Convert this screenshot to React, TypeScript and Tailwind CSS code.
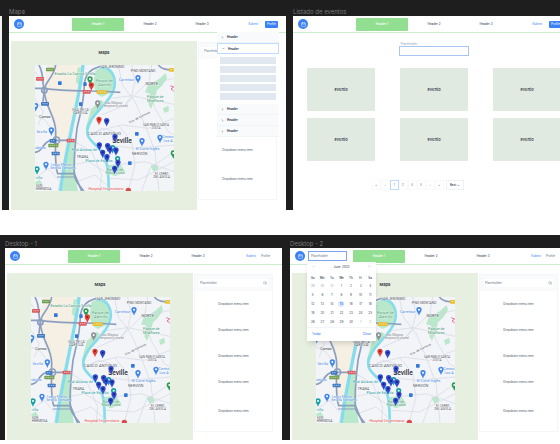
import { type ReactNode } from "react";
import { Calendar, ChevronDown, ChevronLeft, ChevronRight, Search } from "lucide-react";

type Point = [number, number];

const EVENT_PINS: Point[] = [
  [215, 167], [240, 215], [193, 240], [218, 242], [225, 252],
  [243, 255], [203, 262], [216, 275], [249, 292], [239, 310],
];

const MINOR_ROADS = [
  "M250 0 L262 60 L300 110 L330 180 L360 260 L372 378",
  "M230 100 L290 92 L417 118",
  "M200 150 L270 120 L330 60 L417 40",
  "M180 200 L260 180 L340 190 L417 160",
  "M250 180 L290 230 L300 300 L280 378",
  "M215 240 L300 250 L417 240",
  "M240 300 L330 290 L417 320",
  "M225 340 L310 345 L417 290",
  "M320 378 L345 310 L417 260",
  "M120 230 L170 260 L200 330 L195 378",
  "M110 300 L160 290 L210 320",
  "M125 350 L180 330 L215 360",
  "M150 130 L190 135 L230 100",
  "M0 150 L30 165 L55 200",
  "M0 340 L40 310 L75 350 L70 378",
  "M0 20 L20 50 M0 100 L25 140 L10 180",
  "M290 0 L300 50 L290 92 L270 120",
  "M350 0 L340 60 L360 130 L400 200 L417 210",
  "M170 210 L200 190 L240 200",
];

function Pin({ at, color, core, r = 8 }: { at: Point; color: string; core: string; r?: number }) {
  const [x, y] = at;
  return (
    <g>
      <path
        d={`M${x - r} ${y} A${r} ${r} 0 1 1 ${x + r} ${y} C${x + r} ${y + 6} ${x + 2} ${y + 9} ${x} ${y + 18} C${x - 2} ${y + 9} ${x - r} ${y + 6} ${x - r} ${y} Z`}
        fill={color}
      />
      <circle cx={x} cy={y} r={3} fill={core} />
    </g>
  );
}

function Badge({ x, y, w = 24, color }: { x: number; y: number; w?: number; color: string }) {
  return (
    <g>
      <rect x={x - w / 2} y={y - 5} width={w} height={11} rx={2} fill={color} />
      <path d={`M${x - w / 2 + 4} ${y} h${w - 8}`} stroke="#fff" strokeOpacity={0.55} strokeWidth={3} strokeDasharray="4 2" />
    </g>
  );
}

function CityMap() {
  return (
    <svg
      role="img"
      aria-label="Seville"
      viewBox="0 0 417 378"
      className="block h-[126px] w-[139px] font-[Roboto,sans-serif]"
    >
      <rect width="417" height="378" fill="#f3f4f7" />
      <path d="M38 0 H142 L128 120 L96 240 L76 320 L62 310 L58 190 L26 90 Z" fill="#f5efe4" />
      <g fill="#b9e8ca">
        <path d="M182 14 Q210 0 232 20 Q246 50 226 84 L200 96 Q178 86 176 50 Z" />
        <path d="M168 132 L198 104 L206 112 L172 168 L160 196 L152 190 Z" />
        <path d="M338 62 L372 42 L392 24 L396 40 L380 64 L366 76 L360 100 L348 132 L340 118 L346 86 L330 82 Z" />
        <path d="M96 236 L122 226 L118 300 L128 378 H82 Z" />
        <path d="M218 300 L256 298 L272 322 L240 334 L222 326 Z" />
        <path d="M346 302 L362 298 L372 310 L356 320 Z" />
        <path d="M384 130 L400 122 L402 138 L388 144 Z M0 352 L14 344 L22 356 L6 366 Z" />
        <path d="M128 8 L138 6 L132 60 L122 50 Z" />
      </g>
      <g fill="none" stroke="#d0d7e2" strokeWidth="2">
        {MINOR_ROADS.map((d) => (
          <path key={d} d={d} />
        ))}
      </g>
      <g fill="none" stroke="#85dceb">
        <path d="M144 0 C140 50 122 130 108 200 C96 260 82 320 77 378" strokeWidth="10" />
        <path
          d="M196 8 C232 4 246 42 236 74 C226 108 186 136 168 166 C142 208 166 226 188 246 C212 270 222 300 221 378"
          strokeWidth="8"
        />
      </g>
      <g fill="none" stroke="#8c9fbf" strokeWidth="5">
        <path d="M196 4 C160 14 150 32 148 60 C146 120 134 150 126 190 C120 240 116 290 118 330 C120 350 136 364 146 378" />
        <path d="M0 70 H28 C90 80 180 76 256 82" />
        <path d="M62 0 C56 40 28 50 28 76 C30 130 62 150 62 200 C62 260 58 300 68 326 H118 L140 378" />
        <path d="M12 0 C28 30 20 50 28 76 L24 110" />
        <path d="M0 262 C24 262 22 230 48 226 H112" />
        <path d="M370 0 C380 14 396 14 417 14" />
        <circle cx="28" cy="76" r="8" />
        <circle cx="64" cy="226" r="10" strokeWidth="4" />
        <path d="M66 336 H122" strokeWidth="3" />
      </g>

      <g>
        <Badge x={45} y={13} color="#6f9f4d" />
        <Badge x={15} y={41} color="#dc5b61" />
        <Badge x={155} y={80} color="#dc5b61" />
        <Badge x={107} y={226} color="#dc5b61" />
        <Badge x={200} y={81} w={30} color="#eabf2d" />
        <Badge x={411} y={14} w={18} color="#eabf2d" />
        <Badge x={30} y={116} color="#3f79c4" />
        <Badge x={55} y={241} w={30} color="#6f9f4d" />
        <Badge x={62} y={265} color="#3f79c4" />
        <Badge x={54} y={227} w={20} color="#3f79c4" />
      </g>
      <g fill="#3378d8">
        <rect x="69" y="49" width="11" height="11" rx="2" />
        <rect x="145" y="52" width="10" height="11" rx="2" />
        <rect x="132" y="112" width="10" height="11" rx="2" />
        <rect x="300" y="201" width="11" height="11" rx="2" />
        <rect x="279" y="289" width="11" height="11" rx="2" />
      </g>
      <path d="M406 62 L416 66 L408 72 L416 78" stroke="#ec6ba4" strokeWidth="3" fill="none" />

      <g fontSize="10" textAnchor="middle" fill="#4d545f" stroke="#fff" strokeWidth="1" paintOrder="stroke">
        <text x="232" y="8">SAN JERÓNIMO</text>
        <text x="324" y="22">PINO MONTANO</text>
        <text x="350" y="61" fontSize="12">NORTE</text>
        <text x="136" y="137">ISLA DE LA</text>
        <text x="136" y="147">CARTUJA</text>
        <text x="30" y="159" fontSize="11" fill="#333a45">Camas</text>
        <text x="208" y="210" fontSize="13">CASCO ANTIGUO</text>
        <text x="363" y="183" fontSize="9">SAN PABLO SANTA</text>
        <text x="363" y="191" fontSize="9">JUSTA</text>
        <text x="313" y="160" fontSize="9" transform="rotate(-27 313 156)">Ctra. de Carmona</text>
        <text x="314" y="269" fontSize="11">NERVIÓN</text>
        <text x="142" y="279">TRIANA</text>
        <text x="380" y="331" fontSize="9">EL CERRO</text>
        <text x="380" y="340" fontSize="9">DEL ÁGUILA</text>
        <text x="12" y="366">SAN</text>
        <text x="26" y="375">HERMOSA</text>
        <g fill="#7b828d">
          <text x="236" y="117">Isla Mágica</text>
          <text x="240" y="127" fontSize="9">Temporarily closed</text>
        </g>
        <g fill="#35936c" fontSize="11">
          <text x="120" y="31">Estadio La Cartuja Sevilla</text>
          <text x="209" y="50">Parque del</text>
          <text x="209" y="62">Alamillo</text>
          <text x="361" y="98">Parque de</text>
          <text x="361" y="110">Miraflores</text>
          <text x="240" y="317">Parque de</text>
          <text x="240" y="328">María Luisa</text>
        </g>
        <g fill="#249aa3" fontSize="11">
          <text x="148" y="257">Real Alcázar de</text>
          <text x="192" y="292">Plaza de España</text>
          <text x="12" y="341">villa</text>
        </g>
        <g fill="#3d87e0" fontSize="11">
          <text x="275" y="47">Carrefour</text>
          <text x="20" y="203">Sevilla</text>
          <text x="16" y="251">ubicas</text>
          <text x="338" y="254">El Corte Inglés</text>
          <text x="399" y="219">Centro</text>
          <text x="399" y="231">Los A</text>
          <text x="78" y="302">Leroy Merlin</text>
          <text x="84" y="313">Sevilla Tomares</text>
        </g>
        <text x="213" y="376" fontSize="11" fill="#dd4a48">Hospital Universitario</text>
        <text x="261" y="233" fontSize="20" fontWeight="500" fill="#24272d">Seville</text>
      </g>
      <circle cx="280" cy="376" r="8" fill="#dd4a48" />

      <Pin at={[309, 38]} color="#4287ea" core="#fff" />
      <Pin at={[49, 195]} color="#4287ea" core="#fff" />
      <Pin at={[375, 217]} color="#4287ea" core="#fff" />
      <Pin at={[321, 227]} color="#4287ea" core="#fff" />
      <Pin at={[33, 298]} color="#4287ea" core="#fff" />
      <Pin at={[2, 122]} color="#4287ea" core="#fff" />
      <Pin at={[188, 114]} color="#8b929b" core="#fff" />
      <Pin at={[6, 312]} color="#16a1a6" core="#fff" />
      <Pin at={[248, 281]} color="#16a1a6" core="#fff" />
      <Pin at={[233, 248]} color="#16a1a6" core="#fff" />
      <Pin at={[165, 42]} color="#2c9c56" core="#fff" />
      <Pin at={[415, 264]} color="#2c9c56" core="#fff" />
      <Pin at={[169, 60]} color="#e04238" core="#8f1d17" />
      <Pin at={[192, 163]} color="#e04238" core="#8f1d17" />
      {EVENT_PINS.map((at) => (
        <Pin key={at.join()} at={at} color="#3049cf" core="#14226f" />
      ))}
    </svg>
  );
}

function Frame({ title, children }: { title: string; children: ReactNode }) {
  return (
    <section className="flex min-w-0 flex-1 flex-col">
      <h2 className="h-[9px] text-[6px] leading-[9px] text-[#797979]">{title}</h2>
      <div className="relative flex flex-1 flex-col bg-white">{children}</div>
    </section>
  );
}

function TopBar({ profile, children }: { profile: "button" | "link"; children?: ReactNode }) {
  return (
    <header className="flex h-[17px] items-center border-b border-[#c9efcd] pr-[8px] pl-[5px]">
      <div className="flex w-[58px] items-center gap-[3px]">
        <button aria-label="Calendar" className="flex size-[10px] shrink-0 items-center justify-center rounded-full bg-[#3b82f6] text-white">
          <Calendar className="size-[5px]" />
        </button>
        {children}
      </div>
      <nav className="flex text-[3px] leading-[4px] font-medium text-[#475569]">
        <button className="h-[13px] w-[52px] rounded-[1px] bg-[#93df92] text-white">Header 1</button>
        <button className="h-[13px] w-[52px]">Header 2</button>
        <button className="h-[13px] w-[52px]">Header 3</button>
      </nav>
      <div className="ml-auto flex items-center text-[3px] leading-[4px]">
        <a href="#submit" className="text-[#3b82f6]">Submit</a>
        {profile === "button" ? (
          <button className="ml-[7px] h-[7px] w-[13px] rounded-[1px] bg-[#3b82f6] text-white">Profile</button>
        ) : (
          <a href="#profile" className="mr-[4px] ml-[5px] text-[#64748b]">Profile</a>
        )}
      </div>
    </header>
  );
}

function Sidebar() {
  return (
    <aside className="mt-px h-[158px] w-[79px] shrink-0 border border-[#f4f6f9]">
      <div className="bg-[#f8fafc] px-[4px] py-[4px]">
        <div className="flex h-[8px] items-center bg-white px-[1px]">
          <input
            aria-label="Search"
            placeholder="Placeholder"
            className="h-[6px] w-0 flex-1 text-[3px] leading-[6px] outline-none placeholder:text-[#64748b]"
          />
          <Search className="size-[4px] text-[#64748b]" />
        </div>
      </div>
      <ul className="text-center text-[3px] leading-[4px] text-[#475569]">
        {[1, 2, 3, 4, 5].map((n) => (
          <li key={n} className="flex h-[26px] items-center justify-center last:mt-[3px]">
            Dropdown menu item
          </li>
        ))}
      </ul>
    </aside>
  );
}

function MapBody() {
  return (
    <main className="flex flex-1 gap-px pt-[8px] pr-[9px] pl-[2px]">
      <div className="flex flex-1 flex-col items-center bg-[#e7efe0] pt-[9px] pb-[17px]">
        <h3 className="mb-[10px] text-[4px] leading-[5px] font-semibold text-[#1f2937]">Mapa</h3>
        <CityMap />
      </div>
      <Sidebar />
    </main>
  );
}

function AccordionRow({ open = false }: { open?: boolean }) {
  const Chevron = open ? ChevronDown : ChevronRight;
  return (
    <button
      aria-expanded={open}
      className={`flex h-[11px] w-full items-center gap-[3px] px-[4px] text-[3px] leading-[4px] font-bold text-[#334155] ${
        open ? "border border-[#bfdbfe] bg-white" : "border-b border-[#f1f5f9] bg-[#f8fafc]"
      }`}
    >
      <Chevron className="size-[3px]" strokeWidth={3} />
      Header
    </button>
  );
}

function AccordionMenu() {
  return (
    <div className="absolute top-[16px] right-[7px] w-[62px] bg-white">
      <AccordionRow />
      <AccordionRow open />
      <div className="flex flex-col gap-[2px] px-[3px] pt-[3px] pb-[4px]">
        {[1, 2, 3, 4, 5].map((n) => (
          <div key={n} className="h-[7px] bg-[#e2e8f0]" />
        ))}
      </div>
      <AccordionRow />
      <AccordionRow />
      <AccordionRow />
    </div>
  );
}

const WEEKDAYS = ["Su", "Mo", "Tu", "We", "Th", "Fr", "Sa"];
const WEEKS = [
  [29, 30, 31, 1, 2, 3, 4],
  [5, 6, 7, 8, 9, 10, 11],
  [12, 13, 14, 15, 16, 17, 18],
  [19, 20, 21, 22, 23, 24, 25],
  [26, 27, 28, 29, 30, 1, 2],
];

function isOutside(week: number, day: number) {
  return (week === 0 && day > 20) || (week === 4 && day < 10);
}

function DatePicker() {
  return (
    <div className="absolute top-[14px] left-[17px] w-[69px] bg-white pb-[5px] text-[3px] leading-[4px] text-[#475569] shadow-md">
      <div className="flex h-[9px] items-center justify-between px-[5px] font-medium">
        <button aria-label="Previous month"><ChevronLeft className="size-[3px]" /></button>
        <span>June&nbsp; 2022</span>
        <button aria-label="Next month"><ChevronRight className="size-[3px]" /></button>
      </div>
      <table className="mx-auto mb-px w-[67px] table-fixed text-center">
        <thead>
          <tr className="h-[10px]">
            {WEEKDAYS.map((d) => (
              <th key={d} className="p-0 pt-[3px] font-semibold">{d}</th>
            ))}
          </tr>
        </thead>
        <tbody>
          {WEEKS.map((week, w) => (
            <tr key={w} className="h-[9px]">
              {week.map((day) => (
                <td key={day} className="p-0">
                  <button
                    className={`block h-[6px] w-full ${
                      isOutside(w, day) ? "text-[#94a3b8]" : day === 15 ? "font-bold text-[#3b82f6]" : "text-[#334155]"
                    }`}
                  >
                    <span className={day === 15 ? "mx-auto block size-[6px] rounded-full bg-[#dbeafe] leading-[6px]" : ""}>
                      {day}
                    </span>
                  </button>
                </td>
              ))}
            </tr>
          ))}
        </tbody>
      </table>
      <div className="flex justify-between border-t border-[#f1f5f9] px-[5px] pt-[4px] font-medium text-[#3b82f6]">
        <button>Today</button>
        <button>Close</button>
      </div>
    </div>
  );
}

function EventList() {
  return (
    <main className="flex flex-col items-center">
      <div className="mt-[9px] ml-[4px] w-[70px]">
        <label htmlFor="event-filter" className="block h-[4px] pl-[2px] text-[3px] leading-[4px] text-[#94a3b8]">
          Placeholder
        </label>
        <input id="event-filter" className="block h-[10px] w-full border border-[#a8c5f5] outline-none" />
      </div>
      <ul className="mt-[12px] grid w-full grid-cols-3 gap-x-[25px] gap-y-[7px] pr-[9px] pl-[14px]">
        {[1, 2, 3, 4, 5, 6].map((n) => (
          <li
            key={n}
            className="flex h-[43px] items-center justify-center rounded-[1px] bg-[#e0eae1] text-[4px] leading-[5px] font-medium text-[#1f2937]"
          >
            Evento
          </li>
        ))}
      </ul>
      <nav aria-label="Pages" className="mt-[19px] mr-[28px] flex text-[3px] leading-[4px] text-[#64748b]">
        {["«", "‹", "1", "2", "4", "5", "›", "»"].map((p) => (
          <button
            key={p}
            className={`h-[10px] w-[9px] border ${p === "1" ? "border-[#bfdbfe] text-[#3b82f6]" : "border-[#f8fafc]"}`}
          >
            {p}
          </button>
        ))}
        <span className="ml-[2px] flex h-[10px] w-[18px] items-center border border-[#eef2f6] pr-[3px] pl-[3px] text-[#1f2937]">
          <select aria-label="Go to" className="w-0 flex-1 appearance-none bg-transparent font-medium outline-none">
            <option>Next</option>
          </select>
          <ChevronDown className="size-[3px]" strokeWidth={3} />
        </span>
      </nav>
    </main>
  );
}

export default function App() {
  return (
    <div className="min-h-screen overflow-hidden bg-white font-[Inter,sans-serif]">
      <div className="overflow-hidden bg-[#1e1e1e] pt-[7px]">
        <div className="-mr-[10px] flex min-h-[203px] gap-[7px]">
          <div className="mt-[9px] w-[2px] shrink-0 bg-[#f1f1f1]" />
          <Frame title="Mapa">
            <TopBar profile="button" />
            <MapBody />
            <AccordionMenu />
          </Frame>
          <Frame title="Listado de eventos">
            <TopBar profile="button" />
            <EventList />
          </Frame>
        </div>
      </div>

      <div className="mt-[25px] overflow-hidden bg-[#1e1e1e] pt-[4px]">
        <div className="-mr-[7px] flex gap-[8px] pl-[5px]">
          <Frame title="Desktop - 1">
            <TopBar profile="link" />
            <MapBody />
          </Frame>
          <Frame title="Desktop - 2">
            <TopBar profile="link">
              <input
                aria-label="Date"
                placeholder="Placeholder"
                className="h-[10px] w-[39px] shrink-0 border border-[#7ba4ee] px-[2px] text-[3px] leading-[4px] outline-none placeholder:text-[#64748b]"
              />
            </TopBar>
            <MapBody />
            <DatePicker />
          </Frame>
        </div>
      </div>
    </div>
  );
}
